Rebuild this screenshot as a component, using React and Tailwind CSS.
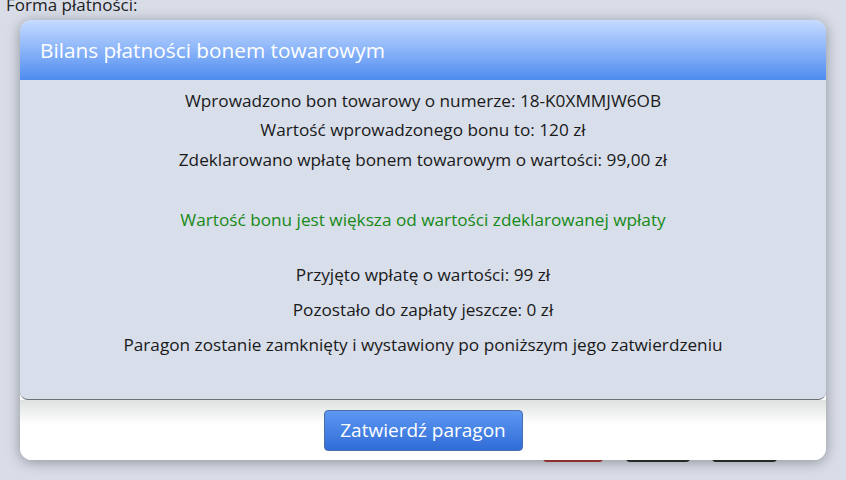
import React from 'react';

const font = { fontFamily: '"Open Sans", "Noto Sans", sans-serif' };

const App = () => {
  return (
    <div className="relative w-[846px] h-[480px] overflow-hidden bg-[#d8dde8] text-[#1a1a1a]" style={font}>
      {/* Tło: formularz pod oknem */}
      <div className="absolute left-[6px] top-[-8px] text-[17px] text-[#222]">Forma płatności:</div>
      <div className="absolute left-[543px] top-[452px] w-[60px] h-[10px] rounded-sm bg-[#b03a3a]" />
      <div className="absolute left-[626px] top-[452px] w-[64px] h-[10px] rounded-sm bg-[#333]" />
      <div className="absolute left-[712px] top-[452px] w-[65px] h-[10px] rounded-sm bg-[#333]" />

      {/* Okno dialogowe */}
      <div className="absolute left-[20px] top-[20px] w-[806px] h-[440px] rounded-[12px] bg-white shadow-[0_2px_14px_rgba(0,0,0,0.35)] flex flex-col overflow-hidden">
        <div className="h-[60px] shrink-0 flex items-center px-[20px] bg-gradient-to-b from-[#c6dbff] to-[#4e8bef]">
          <h1 className="text-[20.8px] text-white leading-none">Bilans płatności bonem towarowym</h1>
        </div>

        <div className="h-[320px] shrink-0 bg-[#d8deea] rounded-b-[8px] border-b border-[#6b6f73] flex flex-col items-center text-[17.2px] pt-[6px]">
          <p className="leading-[29px]">Wprowadzono bon towarowy o numerze: 18-K0XMMJW6OB</p>
          <p className="leading-[29px]">Wartość wprowadzonego bonu to: 120 zł</p>
          <p className="leading-[29px] mt-[1px]">Zdeklarowano wpłatę bonem towarowym o wartości: 99,00 zł</p>
          <p className="leading-[29px] mt-[31px] text-[#168a16]">Wartość bonu jest większa od wartości zdeklarowanej wpłaty</p>
          <p className="leading-[35px] mt-[23px]">Przyjęto wpłatę o wartości: 99 zł</p>
          <p className="leading-[35px]">Pozostało do zapłaty jeszcze: 0 zł</p>
          <p className="leading-[35px]">Paragon zostanie zamknięty i wystawiony po poniższym jego zatwierdzeniu</p>
        </div>

        <div className="flex-1 flex items-center justify-center bg-gradient-to-b from-[#dde2df] via-white via-40% to-white">
          <button className="w-[199px] h-[41px] rounded-[4px] border border-[#4a6fa8] bg-gradient-to-b from-[#5d98f3] to-[#306cd6] text-white text-[19px]">
            Zatwierdź paragon
          </button>
        </div>
      </div>
    </div>
  );
};

export default App;
